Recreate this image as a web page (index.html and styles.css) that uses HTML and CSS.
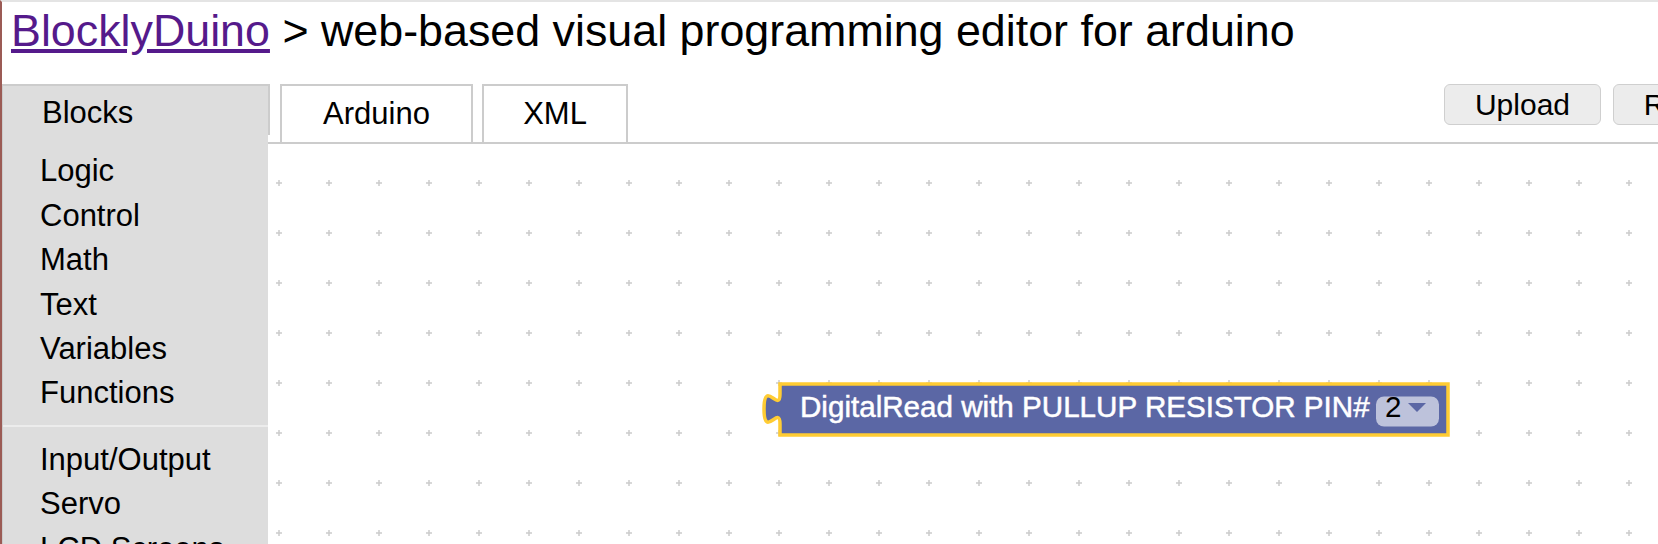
FILE: index.html
```html
<!DOCTYPE html>
<html lang="en">
<head>
<meta charset="utf-8">
<title>BlocklyDuino</title>
<link rel="stylesheet" href="styles.css">
</head>
<body>
<h1 class="title"><a href="#" class="title-link">BlocklyDuino</a> &gt; web-based visual programming editor for arduino</h1>
<div class="app">
  <aside class="sidebar">
    <div class="sidebar-head">Blocks</div>
    <ul class="cat-list">
      <li class="cat-item">Logic</li>
      <li class="cat-item">Control</li>
      <li class="cat-item">Math</li>
      <li class="cat-item">Text</li>
      <li class="cat-item">Variables</li>
      <li class="cat-item">Functions</li>
      <li class="cat-sep"></li>
      <li class="cat-item">Input/Output</li>
      <li class="cat-item">Servo</li>
      <li class="cat-item">LCD Screens</li>
    </ul>
  </aside>
  <main class="main">
    <div class="tabbar">
      <div class="tab tab-arduino">Arduino</div>
      <div class="tab tab-xml">XML</div>
      <div class="actions">
        <button class="btn btn-upload">Upload</button>
        <button class="btn btn-reset">Reset</button>
      </div>
    </div>
    <div class="canvas">
      <svg class="grid" xmlns="http://www.w3.org/2000/svg">
        <defs>
          <pattern id="gridpat" patternUnits="userSpaceOnUse" x="-16" y="14" width="50" height="50">
            <path d="M22 25H28M25 22V28" stroke="#cccccc" stroke-width="1.5" fill="none"/>
          </pattern>
        </defs>
        <rect width="100%" height="100%" fill="url(#gridpat)"/>
      </svg>
      <svg class="block" xmlns="http://www.w3.org/2000/svg" width="710" height="65" viewBox="0 0 710 65">
        <g transform="translate(20,5)">
          <path d="M0,0 H668 V51 H0 V40 c0,-20 -16,16 -16,-15 s16,5 16,-15 Z" fill="#5b67a5" stroke="#ffcc33" stroke-width="3.5"/>
          <text class="block-label" x="20" y="33">DigitalRead with PULLUP RESISTOR PIN#</text>
          <rect x="596" y="12.5" width="63" height="30" rx="8" ry="8" fill="#ffffff" fill-opacity="0.6"/>
          <text class="block-value" x="605" y="33">2</text>
          <polygon points="628,19 646,19 637,28" fill="#5b67a5"/>
        </g>
      </svg>
    </div>
  </main>
</div>
</body>
</html>
```

FILE: styles.css
```css
html, body {
  margin: 0;
  height: 544px;
  overflow: hidden;
}

body {
  box-sizing: border-box;
  border-top: 2px solid #e4e4e4;
  border-left: 2px solid #9b5b55;
  background: #ffffff;
  font-family: "Liberation Sans", Arial, sans-serif;
  color: #000000;
}

.title {
  margin: 0;
  height: 82px;
  box-sizing: border-box;
  padding: 3px 0 0 9px;
  font-size: 44.8px;
  line-height: 50px;
  font-weight: normal;
  white-space: nowrap;
}

.title-link {
  color: #551a8b;
  text-decoration: underline;
}

.app {
  display: grid;
  grid-template-columns: 268px 1fr;
  height: 460px;
}

.sidebar {
  display: flex;
  flex-direction: column;
  min-height: 0;
}

.sidebar-head {
  height: 60px;
  box-sizing: border-box;
  border-top: 2px solid #cccccc;
  border-right: 2px solid #cccccc;
  border-left: 1px solid #cccccc;
  background: #dddddd;
  padding: 5px 0 0 39px;
  font-size: 31px;
  line-height: 44.4px;
}

.cat-list {
  flex: 1;
  margin: 0 2px 0 0;
  padding: 14px 0 0 0;
  list-style: none;
  background: #dddddd;
  border-left: 1px solid #cccccc;
  font-size: 31px;
  line-height: 44.4px;
}

.cat-item {
  padding-left: 37px;
  white-space: nowrap;
}

.cat-sep {
  height: 2px;
  margin: 9px 0 11px;
  background: #ececec;
}

.main {
  display: flex;
  flex-direction: column;
  min-width: 0;
}

.tabbar {
  height: 60px;
  box-sizing: border-box;
  border-bottom: 2px solid #cccccc;
  display: flex;
  align-items: flex-start;
  overflow: hidden;
  margin-left: -2px;
  padding-left: 12px;
}

.tab {
  flex-shrink: 0;
  height: 58px;
  box-sizing: border-box;
  border: 2px solid #cccccc;
  border-bottom: none;
  background: #ffffff;
  text-align: center;
  font-size: 31px;
  line-height: 44px;
  padding-top: 6px;
}

.tab-arduino {
  width: 193px;
}

.tab-xml {
  width: 146px;
  margin-left: 9px;
}

.actions {
  display: flex;
  gap: 12px;
  margin-left: 816px;
  flex-shrink: 0;
}

.btn {
  flex-shrink: 0;
  height: 41px;
  box-sizing: border-box;
  border: 1px solid #cfcfcf;
  border-radius: 6px;
  background: #ececec;
  font-family: "Liberation Sans", Arial, sans-serif;
  font-size: 30px;
  color: #000000;
  padding: 0;
  text-align: center;
}

.btn-upload {
  width: 157px;
}

.btn-reset {
  width: 140px;
}

.canvas {
  position: relative;
  flex: 1;
  overflow: hidden;
}

.grid {
  position: absolute;
  left: 0;
  top: 0;
  width: 100%;
  height: 100%;
}

.block {
  position: absolute;
  left: 490px;
  top: 235px;
  overflow: visible;
}

.block-label,
.block-value {
  font-family: "Liberation Sans", Arial, sans-serif;
  font-size: 29.6px;
}

.block-label {
  fill: #ffffff;
  stroke: #ffffff;
  stroke-width: 0.5px;
}

.block-value {
  fill: #000000;
}
```
